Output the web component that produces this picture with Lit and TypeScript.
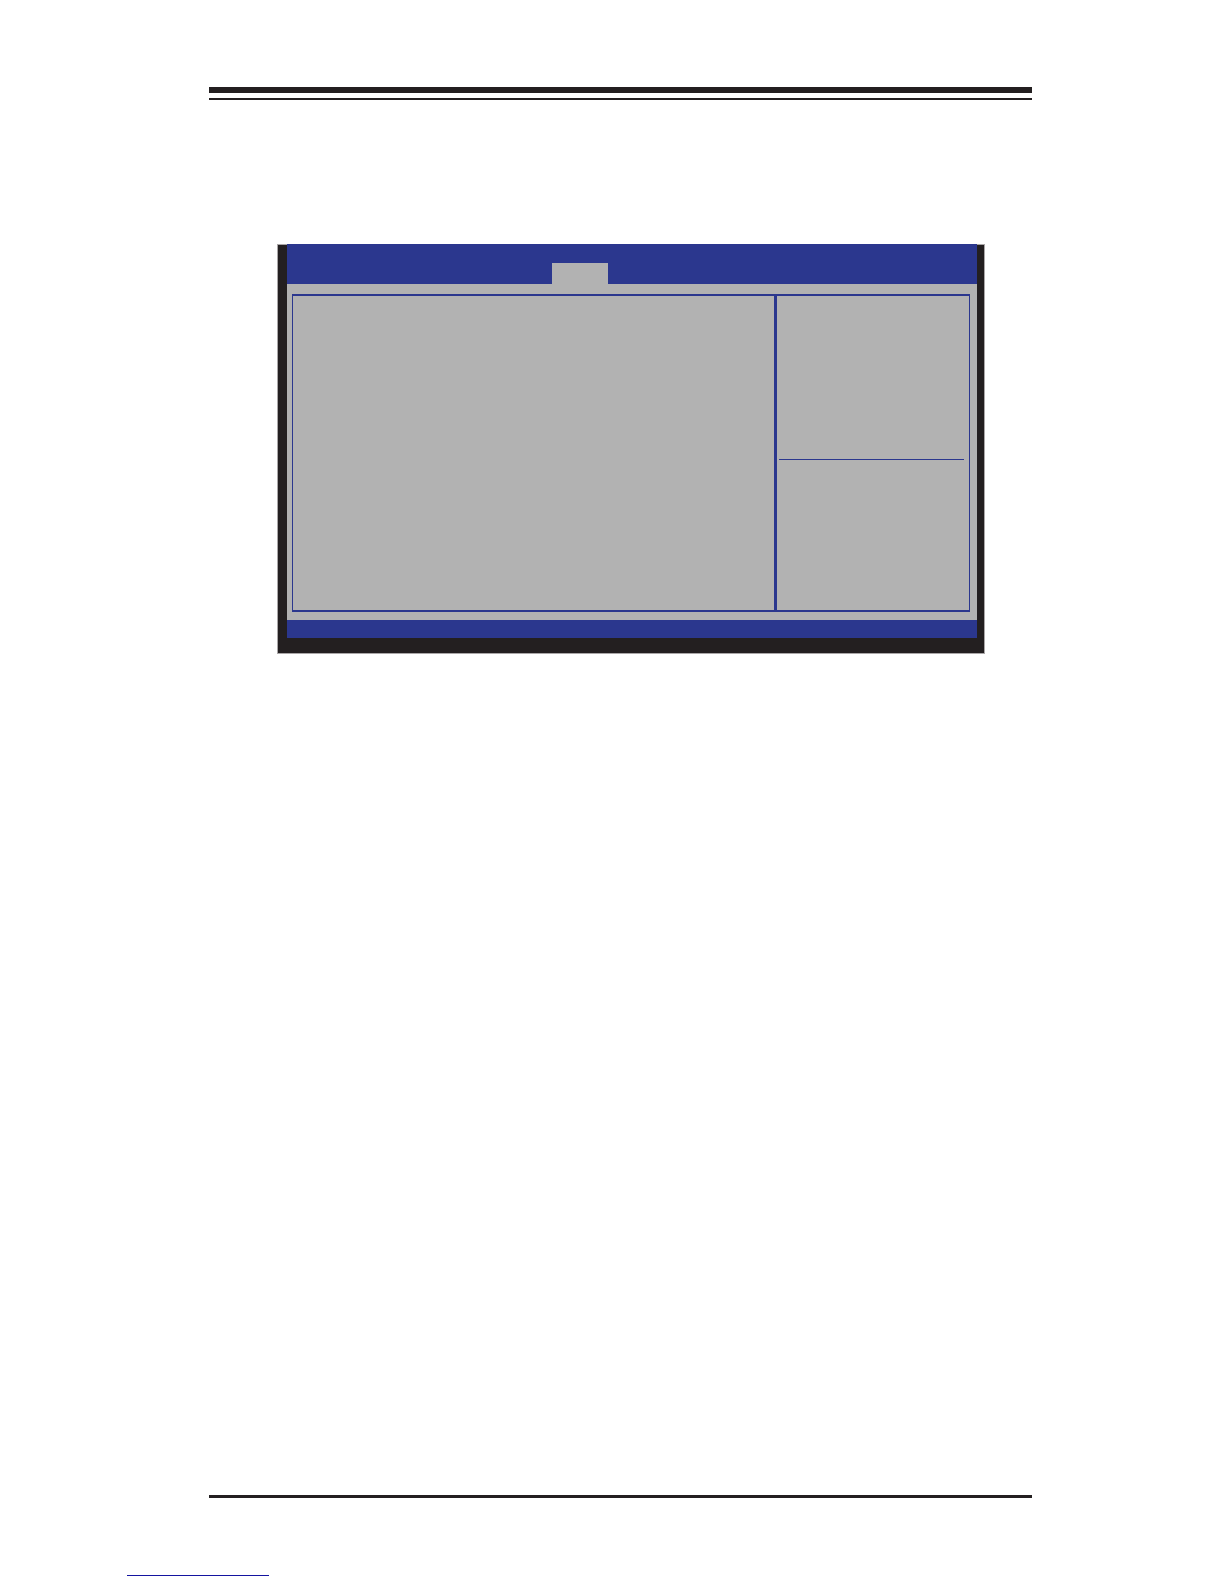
import { LitElement, html, css } from "lit";
import { customElement } from "lit/decorators.js";

/** Setup screen: menu bar with a selected tab, main pane, help pane, status bar. */
@customElement("setup-screen")
class SetupScreen extends LitElement {
  static styles = css`
    :host {
      display: block;
    }
    .frame {
      box-sizing: border-box;
      background: #231f20;
      border: 1px solid #aaa7a8;
      padding: 0 7px 15px 9px;
    }
    /* The menu bar runs over the frame's top border. */
    .menu {
      display: grid;
      grid-template-columns: 265fr 56px 369fr;
      background: #2b378e;
      margin-top: -1px;
      padding-top: 19px;
    }
    .tab {
      grid-column: 2;
      height: 21px;
      background: #b2b2b2;
    }
    .body {
      background: #b2b2b2;
      padding: 10px 7px 8px 5px;
    }
    .panes {
      display: grid;
      grid-template-columns: 1fr 195px;
      min-height: 314px;
      border: solid #2b378e;
      border-width: 2px 1px;
    }
    .help {
      display: flex;
      flex-direction: column;
      border-left: 3px solid #2b378e;
      padding: 0 5px 0 2px;
    }
    .description {
      height: 163px;
      border-bottom: 1px solid #2b378e;
    }
    .status {
      height: 18px;
      background: #2b378e;
    }
  `;

  render() {
    return html`
      <section class="frame">
        <header class="menu"><div class="tab"></div></header>
        <div class="body">
          <div class="panes">
            <div class="main"></div>
            <aside class="help"><div class="description"></div></aside>
          </div>
        </div>
        <footer class="status"></footer>
      </section>
    `;
  }
}

@customElement("app-root")
class AppRoot extends LitElement {
  static styles = css`
    :host {
      display: block;
      background: #ffffff;
      font-family: "Liberation Sans", Arial, sans-serif;
    }
    .page {
      box-sizing: border-box;
      display: flex;
      flex-direction: column;
      min-height: 100vh;
      padding: 87px 192px 8px 209px;
    }
    .page-head {
      height: 5px;
      border-top: 6px solid #231f20;
      border-bottom: 2px solid #231f20;
    }
    .figure {
      margin: 144px 47px 0 68px;
    }
    .page-foot {
      margin-top: auto;
      border-top: 3px solid #231f20;
    }
    .link-line {
      width: 142px;
      margin: 77px 0 0 -82px;
      border-top: 1px solid #1414a0;
    }
  `;

  render() {
    return html`
      <main class="page">
        <header class="page-head"></header>
        <setup-screen class="figure"></setup-screen>
        <footer class="page-foot"><div class="link-line"></div></footer>
      </main>
    `;
  }
}
